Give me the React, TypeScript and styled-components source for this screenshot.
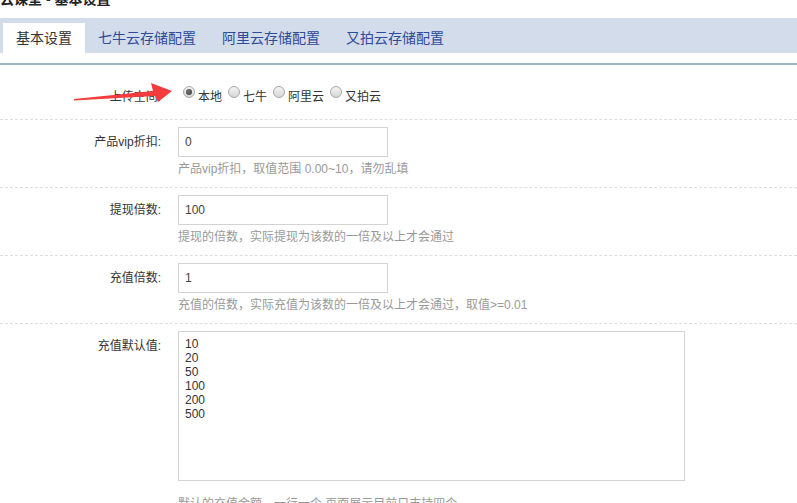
import React from 'react';
import styled, { createGlobalStyle } from 'styled-components';

const GlobalStyle = createGlobalStyle`
  html, body {
    margin: 0;
    padding: 0;
    background: #fff;
    overflow: hidden;
  }
  body {
    font-family: "Liberation Sans", "Noto Sans CJK SC", sans-serif;
    font-size: 12px;
    color: #333;
  }
`;

const Page = styled.div`
  display: flow-root;
  position: relative;
  width: 797px;
  height: 503px;
  overflow: hidden;
`;

const Title = styled.h1`
  margin: -11px 0 9px;
  height: 20px;
  line-height: 20px;
  font-size: 14px;
  font-weight: bold;
  color: #222;
`;

const TabBar = styled.div`
  display: flex;
  align-items: flex-end;
  height: 35px;
  padding-left: 3px;
  background: #d3dcea;
`;

const Tab = styled.div<{ $active?: boolean }>`
  height: 30px;
  line-height: 30px;
  padding: 0 13px;
  font-size: 14px;
  color: ${p => (p.$active ? '#333' : '#2c4b98')};
  background: ${p => (p.$active ? '#fff' : 'transparent')};
  cursor: pointer;
`;

const Divider = styled.div`
  margin-top: 10px;
  height: 2px;
  background: #9bb6c9;
`;

const Form = styled.div`
  padding-top: 10px;
`;

const Row = styled.div<{ $last?: boolean }>`
  display: grid;
  grid-template-columns: 161px 1fr;
  column-gap: 17px;
  padding: 7px 0 ${p => (p.$last ? '0' : '7px')};
  border-bottom: ${p => (p.$last ? 'none' : '1px dashed #dedede')};
`;

const FieldRow = styled(Row)`
  padding-bottom: 9px;
`;

const Label = styled.div`
  line-height: 30px;
  text-align: right;
  color: #333;
  white-space: nowrap;
`;

const Field = styled.div`
  display: flex;
  flex-direction: column;
  align-items: flex-start;
`;

const RadioGroup = styled.div`
  display: flex;
  padding-left: 5px;
  height: 30px;
`;

const RadioOption = styled.label`
  display: flex;
  align-items: flex-start;
  height: 30px;
  line-height: 30px;
  margin-right: 6px;
  color: #333;
`;

const RadioDot = styled.span<{ $checked?: boolean }>`
  position: relative;
  box-sizing: border-box;
  width: 12px;
  height: 12px;
  margin: 4px 3px 0 0;
  border-radius: 50%;
  border: 1px solid #a9a9a9;
  background: linear-gradient(#f4f4f4, #d6d6d6);
  &::after {
    content: '';
    display: ${p => (p.$checked ? 'block' : 'none')};
    position: absolute;
    left: 2px;
    top: 2px;
    width: 6px;
    height: 6px;
    border-radius: 50%;
    background: radial-gradient(circle at 40% 40%, #777, #333);
  }
`;

const TextInput = styled.input`
  box-sizing: border-box;
  width: 210px;
  height: 30px;
  margin: 0;
  padding: 0 6px;
  border: 1px solid #d3d3d3;
  font-family: "Liberation Sans", "Noto Sans CJK SC", sans-serif;
  font-size: 12px;
  color: #444;
  outline: none;
`;

const TextArea = styled.textarea`
  display: block;
  box-sizing: border-box;
  width: 507px;
  height: 150px;
  margin: 0 0 11px;
  padding: 5px 6px;
  border: 1px solid #d3d3d3;
  font-family: "Liberation Sans", "Noto Sans CJK SC", sans-serif;
  font-size: 12px;
  line-height: 14px;
  color: #333;
  resize: none;
  outline: none;
`;

const Help = styled.div`
  margin-top: 3px;
  line-height: 18px;
  color: #999;
  white-space: nowrap;
`;

const Arrow = styled.svg`
  position: absolute;
  left: 70px;
  top: 80px;
  width: 110px;
  height: 26px;
  pointer-events: none;
`;

const tabs = ['基本设置', '七牛云存储配置', '阿里云存储配置', '又拍云存储配置'];
const storages = ['本地', '七牛', '阿里云', '又拍云'];

export default function App() {
  return (
    <Page>
      <GlobalStyle />
      <Title>云课堂 - 基本设置</Title>
      <TabBar>
        {tabs.map((t, i) => (
          <Tab key={t} $active={i === 0}>{t}</Tab>
        ))}
      </TabBar>
      <Divider />
      <Form>
        <Row>
          <Label>上传空间:</Label>
          <RadioGroup>
            {storages.map((s, i) => (
              <RadioOption key={s}>
                <RadioDot $checked={i === 0} />
                {s}
              </RadioOption>
            ))}
          </RadioGroup>
        </Row>
        <FieldRow>
          <Label>产品vip折扣:</Label>
          <Field>
            <TextInput defaultValue="0" />
            <Help>产品vip折扣，取值范围 0.00~10，请勿乱填</Help>
          </Field>
        </FieldRow>
        <FieldRow>
          <Label>提现倍数:</Label>
          <Field>
            <TextInput defaultValue="100" />
            <Help>提现的倍数，实际提现为该数的一倍及以上才会通过</Help>
          </Field>
        </FieldRow>
        <FieldRow>
          <Label>充值倍数:</Label>
          <Field>
            <TextInput defaultValue="1" />
            <Help>充值的倍数，实际充值为该数的一倍及以上才会通过，取值&gt;=0.01</Help>
          </Field>
        </FieldRow>
        <Row $last>
          <Label>充值默认值:</Label>
          <Field>
            <TextArea defaultValue={'10\n20\n50\n100\n200\n500'} />
            <Help>默认的充值金额，一行一个,页面展示目前只支持四个</Help>
          </Field>
        </Row>
      </Form>
      <Arrow viewBox="0 0 110 26">
        <polygon points="4,19 83,11 81,3 102,11 88,22 85,16 4,20.5" fill="#f43c3c" />
      </Arrow>
    </Page>
  );
}
